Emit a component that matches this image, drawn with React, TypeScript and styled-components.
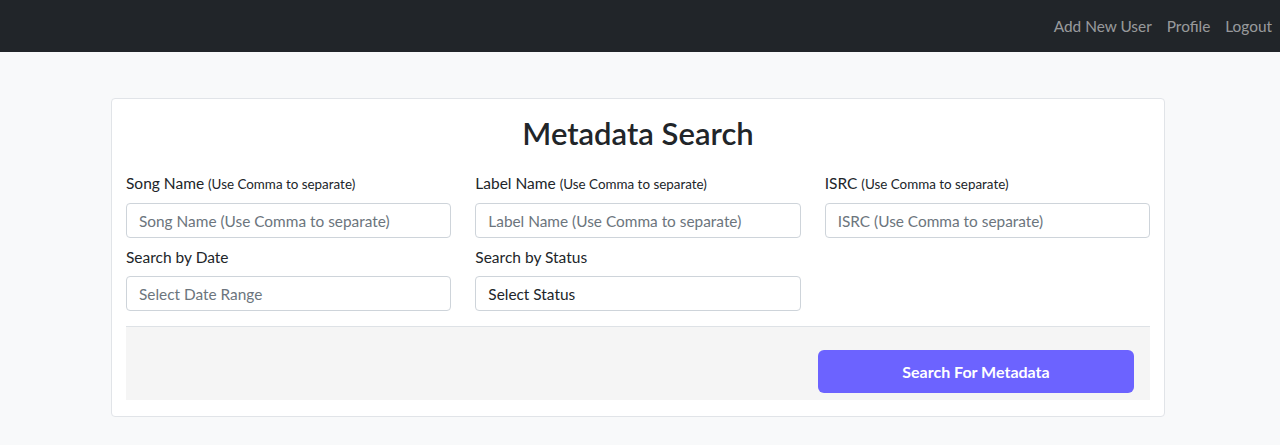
import { createGlobalStyle, styled } from 'styled-components';

const GlobalStyle = createGlobalStyle`
  * { box-sizing: border-box; }
  body {
    margin: 0;
    background: #f8f9fa;
    font-family: 'Segoe UI', Lato, 'Liberation Sans', sans-serif;
    color: #212529;
  }
`;

const Navbar = styled.nav`
  height: 52px;
  background: #212529;
  display: flex;
  align-items: center;
  justify-content: flex-end;
`;

const NavLink = styled.a`
  color: rgba(255, 255, 255, 0.55);
  font-size: 15.4px;
  padding: 0 7.5px;
  text-decoration: none;
  cursor: pointer;
  &:last-child {
    padding-right: 8px;
  }
`;

const Main = styled.main`
  padding: 46px 115px 28px 111px;
`;

const Card = styled.section`
  background: #fff;
  border: 1px solid #e1e4e8;
  border-radius: 4px;
  padding: 15px 14px 16px;
`;

const Title = styled.h1`
  margin: 0 0 19px;
  text-align: center;
  font-size: 31px;
  line-height: 38px;
  font-weight: 600;
  color: #212529;
`;

const Grid = styled.div`
  display: grid;
  grid-template-columns: repeat(3, 1fr);
  column-gap: 24px;
  row-gap: 7px;
`;

const Field = styled.div`
  display: flex;
  flex-direction: column;
`;

const Label = styled.label`
  font-size: 15.5px;
  line-height: 24px;
  margin-bottom: 7px;
  color: #212529;

  & > small {
    font-size: 13.4px;
  }
`;

const Input = styled.input`
  height: 35px;
  border: 1px solid #ced4da;
  border-radius: 4px;
  padding: 0 12px;
  font-family: inherit;
  font-size: 15.4px;
  color: #212529;
  background: #fff;

  &::placeholder {
    color: #6c757d;
  }
`;

const Select = styled.div`
  height: 35px;
  border: 1px solid #ced4da;
  border-radius: 4px;
  padding: 0 12px;
  display: flex;
  align-items: center;
  font-size: 15.4px;
  color: #212529;
  background: #fff;
`;

const Footer = styled.div`
  margin-top: 15px;
  background: #f5f5f5;
  border-top: 1px solid #dee2e6;
  display: flex;
  justify-content: flex-end;
  padding: 23px 16px 7px;
`;

const Button = styled.button`
  width: 316px;
  height: 43px;
  border: none;
  border-radius: 6px;
  background: #6c63ff;
  color: #fff;
  font-family: inherit;
  font-size: 16px;
  font-weight: 700;
  cursor: pointer;
`;

const fields = [
  { label: 'Song Name', hint: '(Use Comma to separate)' },
  { label: 'Label Name', hint: '(Use Comma to separate)' },
  { label: 'ISRC', hint: '(Use Comma to separate)' },
];

export default function App() {
  return (
    <>
      <GlobalStyle />
      <Navbar>
        <NavLink>Add New User</NavLink>
        <NavLink>Profile</NavLink>
        <NavLink>Logout</NavLink>
      </Navbar>
      <Main>
        <Card>
          <Title>Metadata Search</Title>
          <Grid>
            {fields.map((f) => (
              <Field key={f.label}>
                <Label>
                  {f.label} <small>{f.hint}</small>
                </Label>
                <Input placeholder={`${f.label} ${f.hint}`} />
              </Field>
            ))}
            <Field>
              <Label>Search by Date</Label>
              <Input placeholder="Select Date Range" />
            </Field>
            <Field>
              <Label>Search by Status</Label>
              <Select>Select Status</Select>
            </Field>
          </Grid>
          <Footer>
            <Button>Search For Metadata</Button>
          </Footer>
        </Card>
      </Main>
    </>
  );
}
